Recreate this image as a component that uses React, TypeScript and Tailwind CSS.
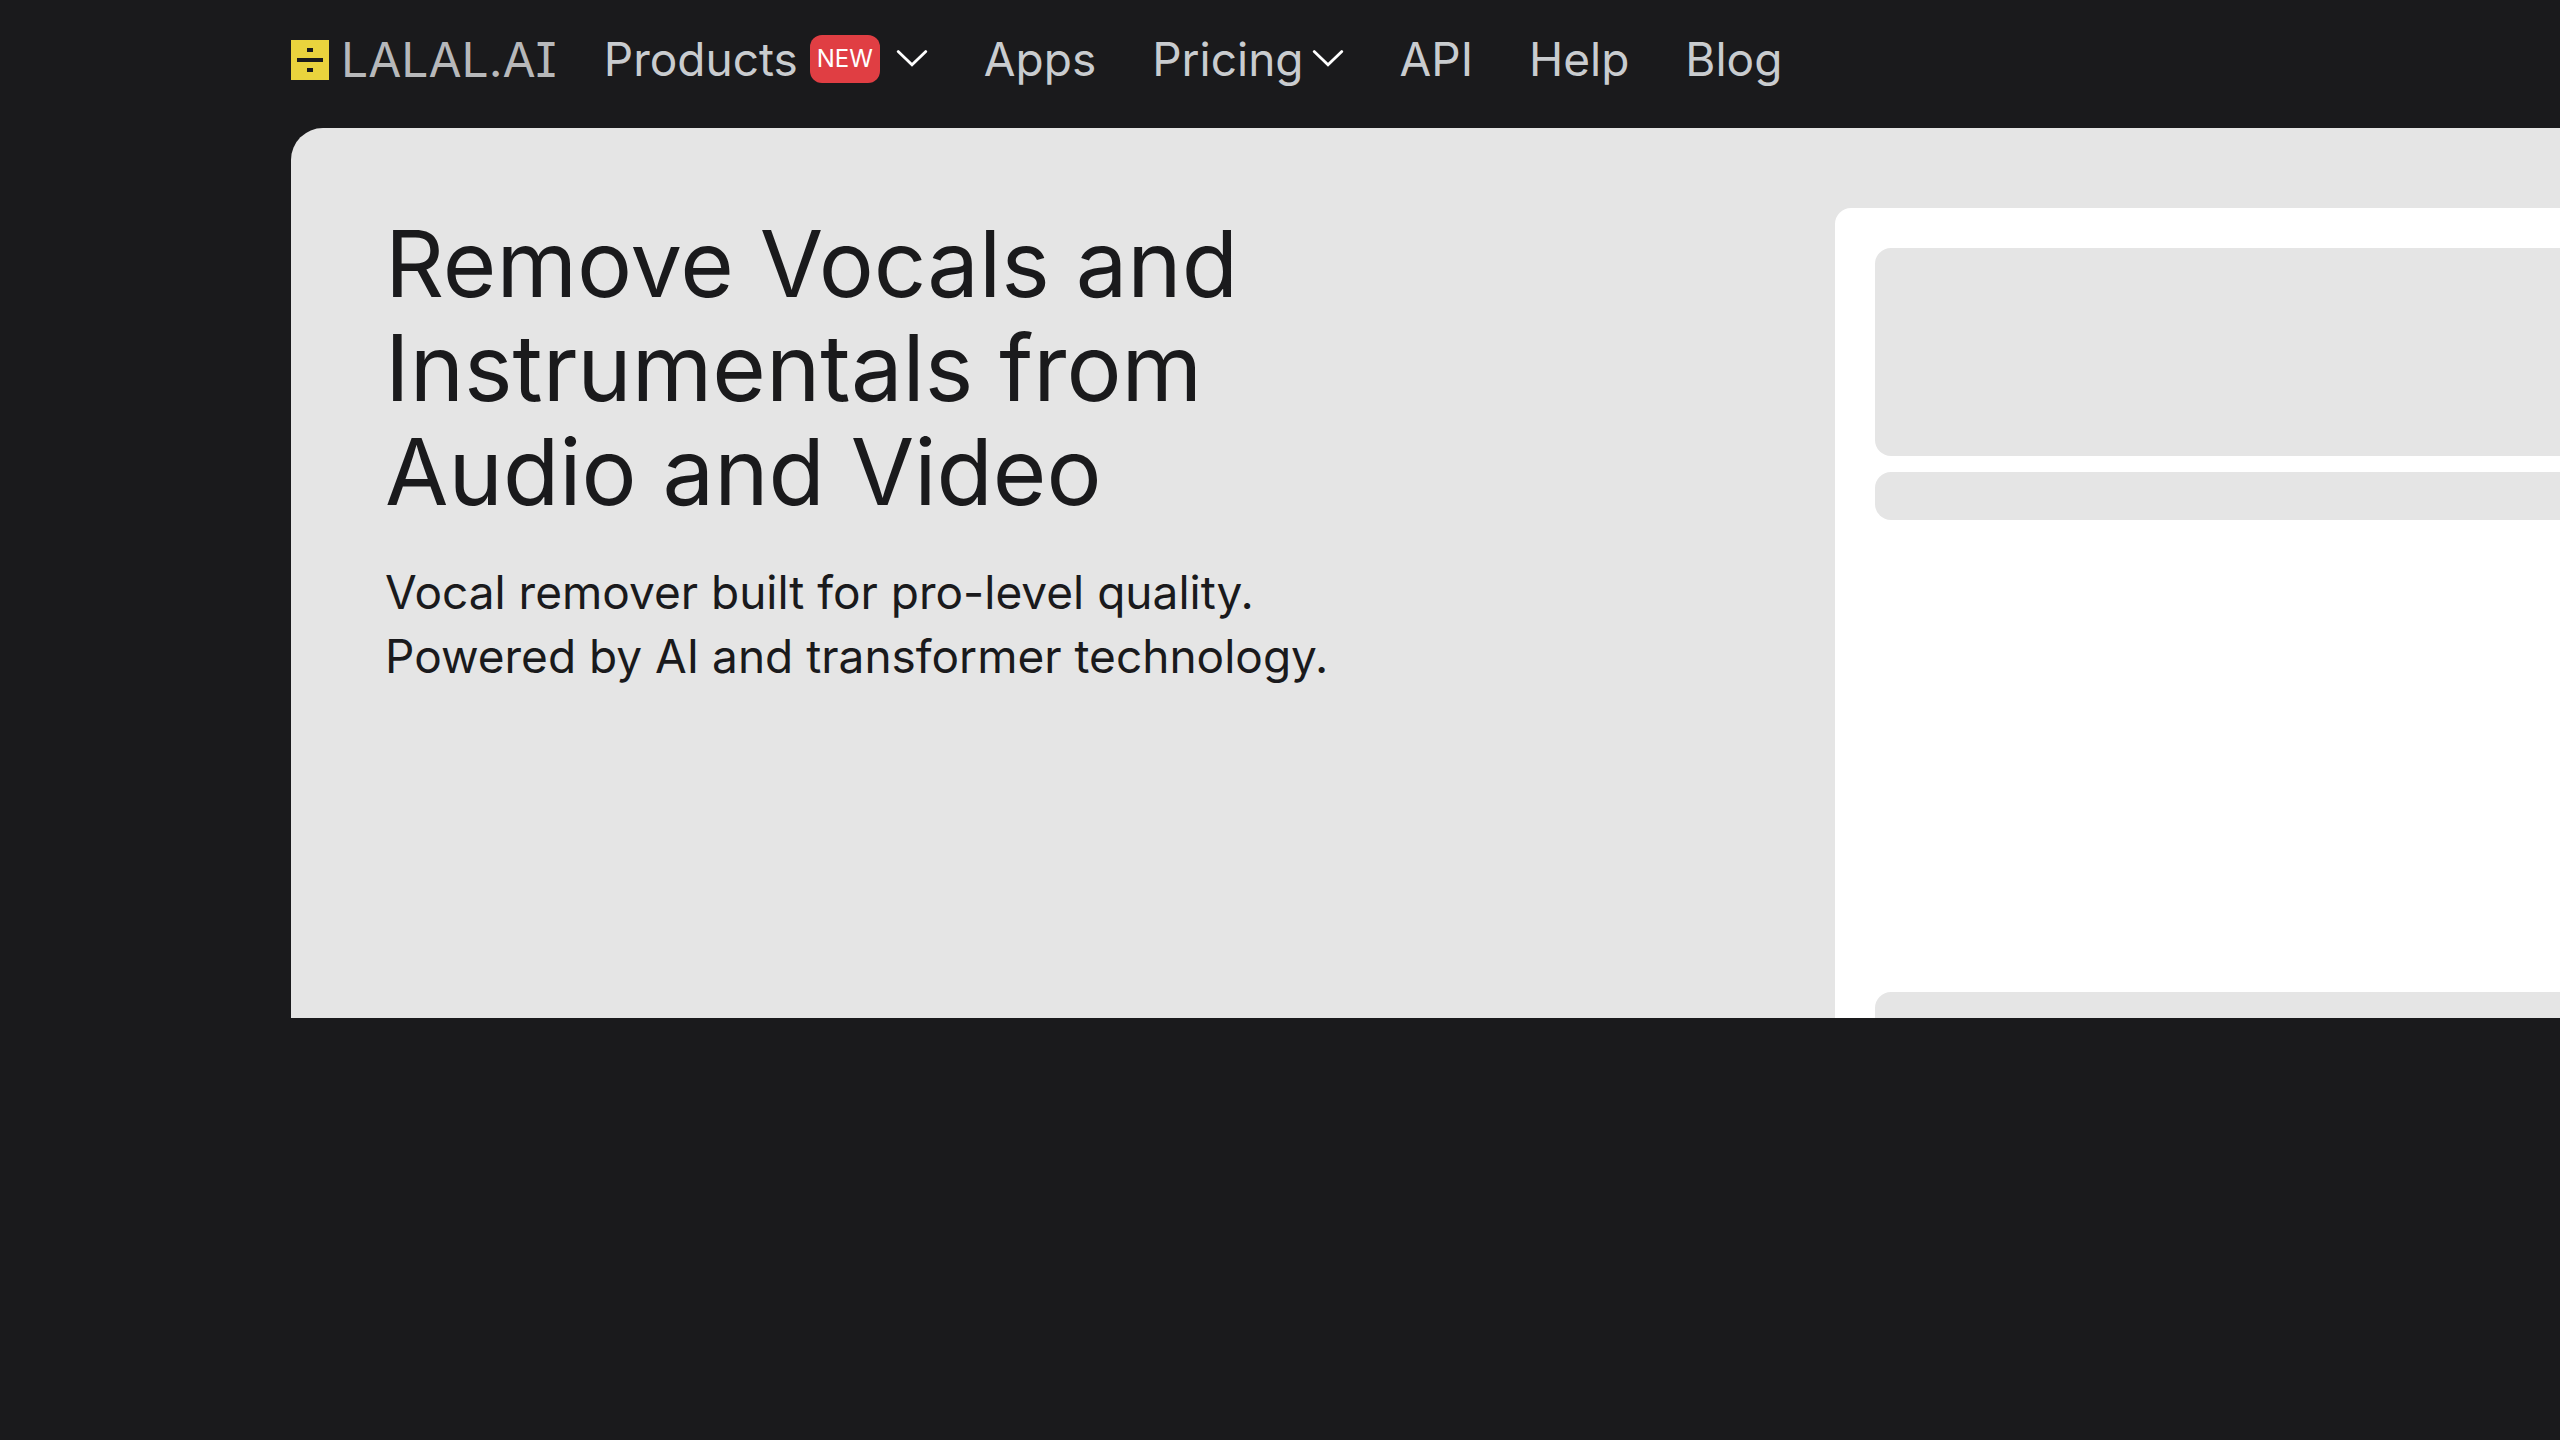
import type { ReactNode } from 'react'

function LogoMark() {
  return (
    <svg width="38" height="40" viewBox="0 0 38 40" shapeRendering="crispEdges" aria-hidden="true">
      <rect width="38" height="40" fill="#ead33d" />
      <rect x="16" y="8" width="6" height="4" fill="#1a1a1c" />
      <rect x="6" y="18" width="26" height="4" fill="#1a1a1c" />
      <rect x="16" y="28" width="6" height="4" fill="#1a1a1c" />
    </svg>
  )
}

function Chevron() {
  return (
    <svg width="32" height="18" viewBox="0 0 32 18" fill="none" aria-hidden="true">
      <path d="M2.2 1.6 L16 14.8 L29.8 1.6" stroke="#fff" strokeWidth="2.8" strokeLinecap="round" />
    </svg>
  )
}

function NavLink({ children }: { children: ReactNode }) {
  return (
    <a href="#" className="hover:text-white">
      {children}
    </a>
  )
}

export default function App() {
  return (
    <div className="min-h-screen overflow-hidden bg-[#1a1a1c] pl-[291px] font-['Inter',sans-serif]">
      <header className="flex h-32 items-start pt-7 text-[#c9cccf]">
        <a href="#" className="flex h-16 items-center gap-3 text-[#b7b8ba]">
          <LogoMark />
          <span className="text-[48px] leading-[64px] [font-feature-settings:'cv08']">LALAL.AI</span>
        </a>
        <nav className="ml-[47px] flex h-[62px] items-center gap-14 text-[46px] leading-[64px]">
          <button type="button" className="flex items-center gap-4">
            <span className="flex items-center gap-3">
              Products
              <span className="flex h-12 w-[70px] items-center justify-center rounded-xl bg-[#e03e43] text-2xl text-white">NEW</span>
            </span>
            <Chevron />
          </button>
          <NavLink>Apps</NavLink>
          <button type="button" className="flex items-center gap-2">
            Pricing
            <Chevron />
          </button>
          <NavLink>API</NavLink>
          <NavLink>Help</NavLink>
          <NavLink>Blog</NavLink>
        </nav>
      </header>

      <main className="grid h-[890px] grid-cols-[1fr_725px] overflow-hidden rounded-tl-[32px] bg-[#e5e5e5] pt-20 pl-[94px] text-[#1a1a1c]">
        <div className="pt-1">
          <h1 className="text-[92px] leading-[104px]">
            Remove Vocals and
            <br />
            Instrumentals from
            <br />
            Audio and Video
          </h1>
          <p className="mt-9 text-[46px] leading-[64px]">
            Vocal remover built for pro-level quality.
            <br />
            Powered by AI and transformer technology.
          </p>
        </div>

        {/* Uploader placeholder */}
        <div className="rounded-tl-2xl bg-white pt-10 pl-10">
          <div className="h-52 rounded-l-2xl bg-[#e5e5e5]" />
          <div className="mt-4 h-12 rounded-l-2xl bg-[#e5e5e5]" />
          <div className="mt-[472px] h-52 rounded-l-2xl bg-[#e5e5e5]" />
        </div>
      </main>
    </div>
  )
}
